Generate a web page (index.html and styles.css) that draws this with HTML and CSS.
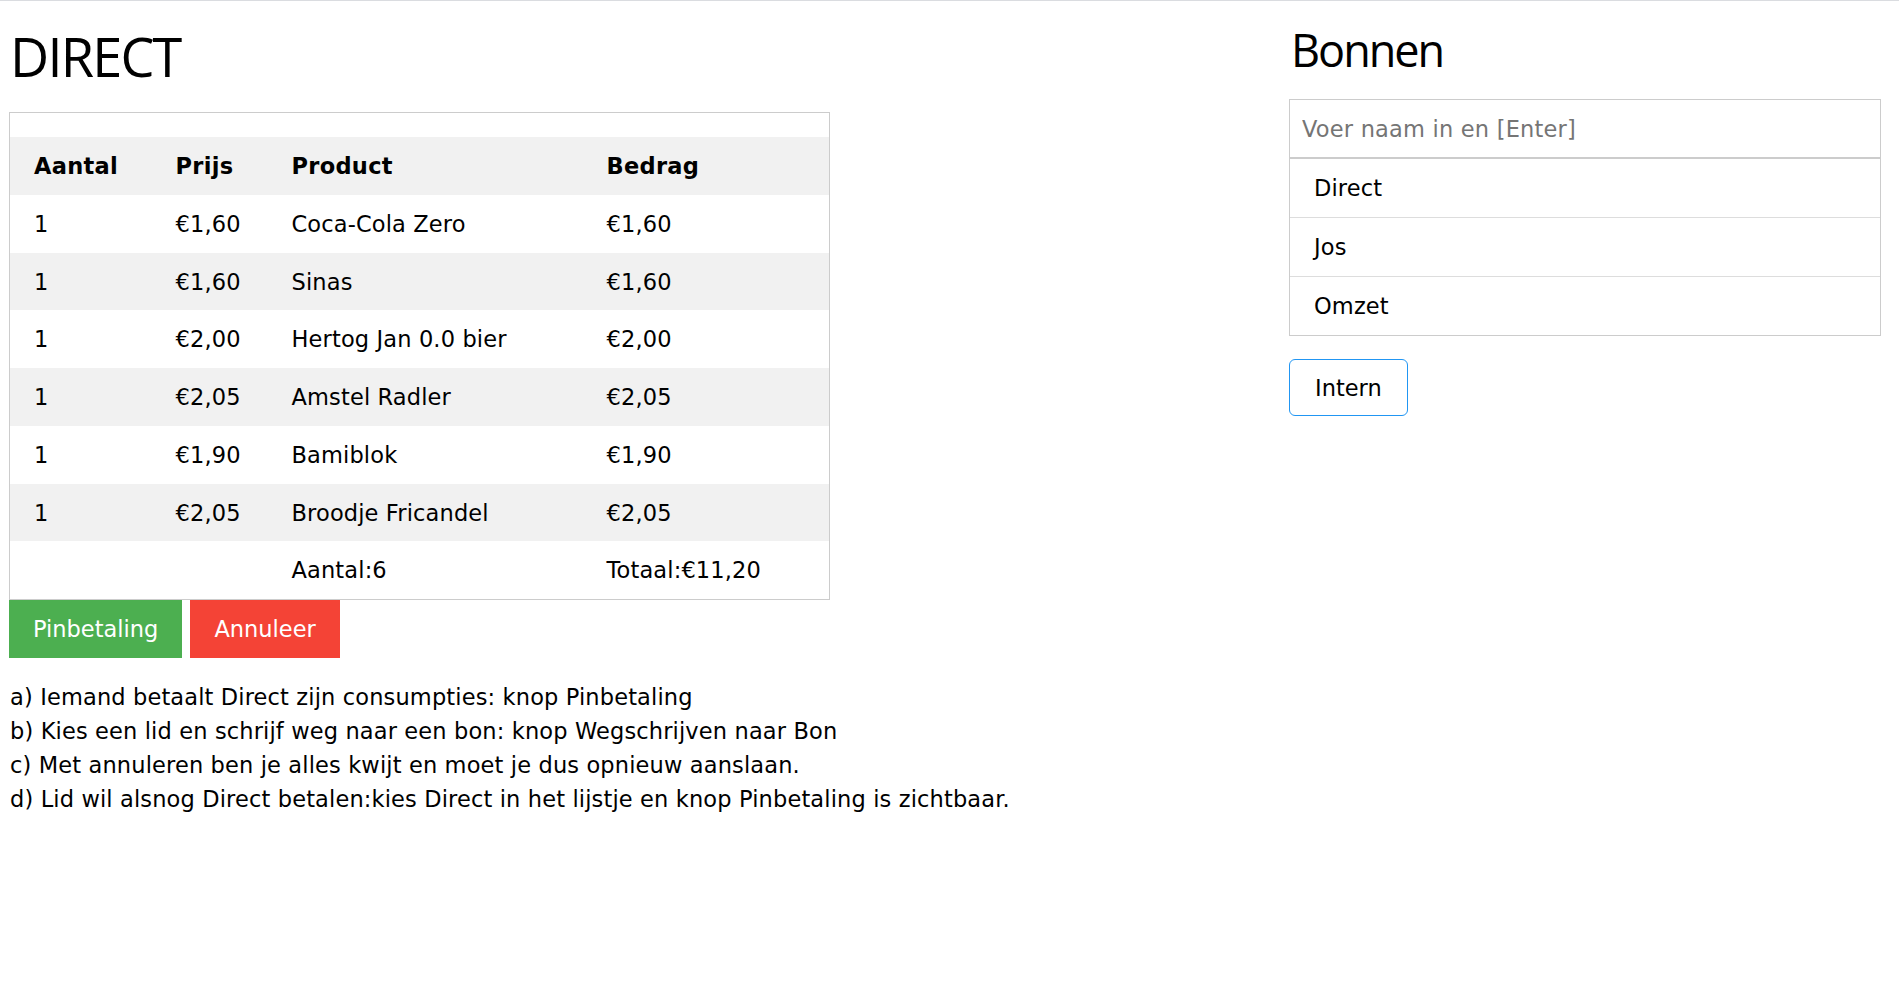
FILE: index.html
```html
<!DOCTYPE html>
<html lang="nl">
<head>
<meta charset="utf-8">
<title>Kassa</title>
<link rel="stylesheet" href="styles.css">
</head>
<body>
<div class="topline"></div>
<div class="page">
  <div class="left">
    <h1 class="title">DIRECT</h1>
    <table class="bon">
      <colgroup>
        <col class="c1"><col class="c2"><col class="c3"><col class="c4">
      </colgroup>
      <tr class="spacer"><td></td><td></td><td></td><td></td></tr>
      <tr><th>Aantal</th><th>Prijs</th><th>Product</th><th>Bedrag</th></tr>
      <tr><td>1</td><td>€1,60</td><td>Coca-Cola Zero</td><td>€1,60</td></tr>
      <tr><td>1</td><td>€1,60</td><td>Sinas</td><td>€1,60</td></tr>
      <tr><td>1</td><td>€2,00</td><td>Hertog Jan 0.0 bier</td><td>€2,00</td></tr>
      <tr><td>1</td><td>€2,05</td><td>Amstel Radler</td><td>€2,05</td></tr>
      <tr><td>1</td><td>€1,90</td><td>Bamiblok</td><td>€1,90</td></tr>
      <tr><td>1</td><td>€2,05</td><td>Broodje Fricandel</td><td>€2,05</td></tr>
      <tr><td></td><td></td><td>Aantal:6</td><td>Totaal:€11,20</td></tr>
    </table>
    <div class="actions">
      <button class="btn green">Pinbetaling</button>
      <button class="btn red">Annuleer</button>
    </div>
    <p class="help">a) Iemand betaalt Direct zijn consumpties: knop Pinbetaling<br>b) Kies een lid en schrijf weg naar een bon: knop Wegschrijven naar Bon<br>c) Met annuleren ben je alles kwijt en moet je dus opnieuw aanslaan.<br>d) Lid wil alsnog Direct betalen:kies Direct in het lijstje en knop Pinbetaling is zichtbaar.</p>
  </div>
  <div class="right">
    <h2 class="subtitle">Bonnen</h2>
    <input class="search" type="text" placeholder="Voer naam in en [Enter]">
    <ul class="list">
      <li>Direct</li>
      <li>Jos</li>
      <li>Omzet</li>
    </ul>
    <button class="btn outline">Intern</button>
  </div>
</div>
</body>
</html>
```
FILE: styles.css
```css
html, body {
  margin: 0;
  padding: 0;
  background: #fff;
}
body {
  font-family: "DejaVu Sans", Verdana, sans-serif;
  font-size: 22.5px;
  line-height: 1.5;
  color: #000;
  letter-spacing: 0.14px;
}
.topline {
  height: 1px;
  background: #dadce0;
}
.page {
  display: flex;
  align-items: flex-start;
  padding: 0 18px 0 9px;
}
.left {
  width: 821px;
}
.right {
  width: 592px;
  margin-left: auto;
}
.title {
  font-family: "Open Sans", "Noto Sans", sans-serif;
  font-weight: 400;
  font-size: 54px;
  line-height: 81px;
  margin: 15px 0 15px 0;
  padding-left: 1px;
  letter-spacing: -1.8px;
}
.subtitle {
  font-family: "Open Sans", "Noto Sans", sans-serif;
  font-weight: 400;
  font-size: 45px;
  line-height: 67.5px;
  margin: 15px 0 15px 0;
  padding-left: 2px;
  letter-spacing: -2px;
}
.bon {
  width: 821px;
  border-collapse: collapse;
  border: 1px solid #ccc;
  table-layout: fixed;
}
.c1 { width: 154px; }
.c2 { width: 116px; }
.c3 { width: 315px; }
.c4 { width: 235px; }
.bon tr:nth-child(even) {
  background: #f1f1f1;
}
.bon td, .bon th {
  padding: 13px 12px 11px 12px;
  text-align: left;
  vertical-align: top;
  white-space: nowrap;
}
.bon .spacer td {
  padding: 12px 12px;
}
.bon td:first-child, .bon th:first-child {
  padding-left: 24px;
}
.bon th {
  font-weight: 700;
  letter-spacing: 0.3px;
}
.actions {
  display: flex;
  gap: 8px;
}
.btn {
  font-family: "DejaVu Sans", Verdana, sans-serif;
  font-size: 22.5px;
  line-height: 33.75px;
  padding: 13px 24px 11px 24px;
  border: none;
  margin: 0;
  cursor: pointer;
  letter-spacing: 0;
}
.green {
  background: #4caf50;
  color: #fff;
}
.red {
  background: #f44336;
  color: #fff;
}
.help {
  margin: 23.5px 0 0 0;
  padding-left: 1px;
  white-space: nowrap;
}
.search {
  display: block;
  box-sizing: border-box;
  width: 100%;
  margin: 0;
  border: 1px solid #ccc;
  padding: 13px 12px 11px 12px;
  font-family: "DejaVu Sans", Verdana, sans-serif;
  font-size: 22.5px;
  line-height: 33.75px;
  height: 59.75px;
  color: #000;
  outline: none;
  letter-spacing: 0.2px;
}
.search::placeholder {
  color: #757575;
}
.list {
  list-style: none;
  margin: 0 0 23px 0;
  padding: 0;
  border: 1px solid #ccc;
}
.list li {
  padding: 13px 24px 11px 24px;
  border-bottom: 1px solid #ddd;
}
.list li:last-child {
  border-bottom: none;
}
.outline {
  background: #fff;
  color: #000;
  border: 1px solid #2196f3;
  border-radius: 6px;
  padding: 12px 25px 10px 25px;
}
```
